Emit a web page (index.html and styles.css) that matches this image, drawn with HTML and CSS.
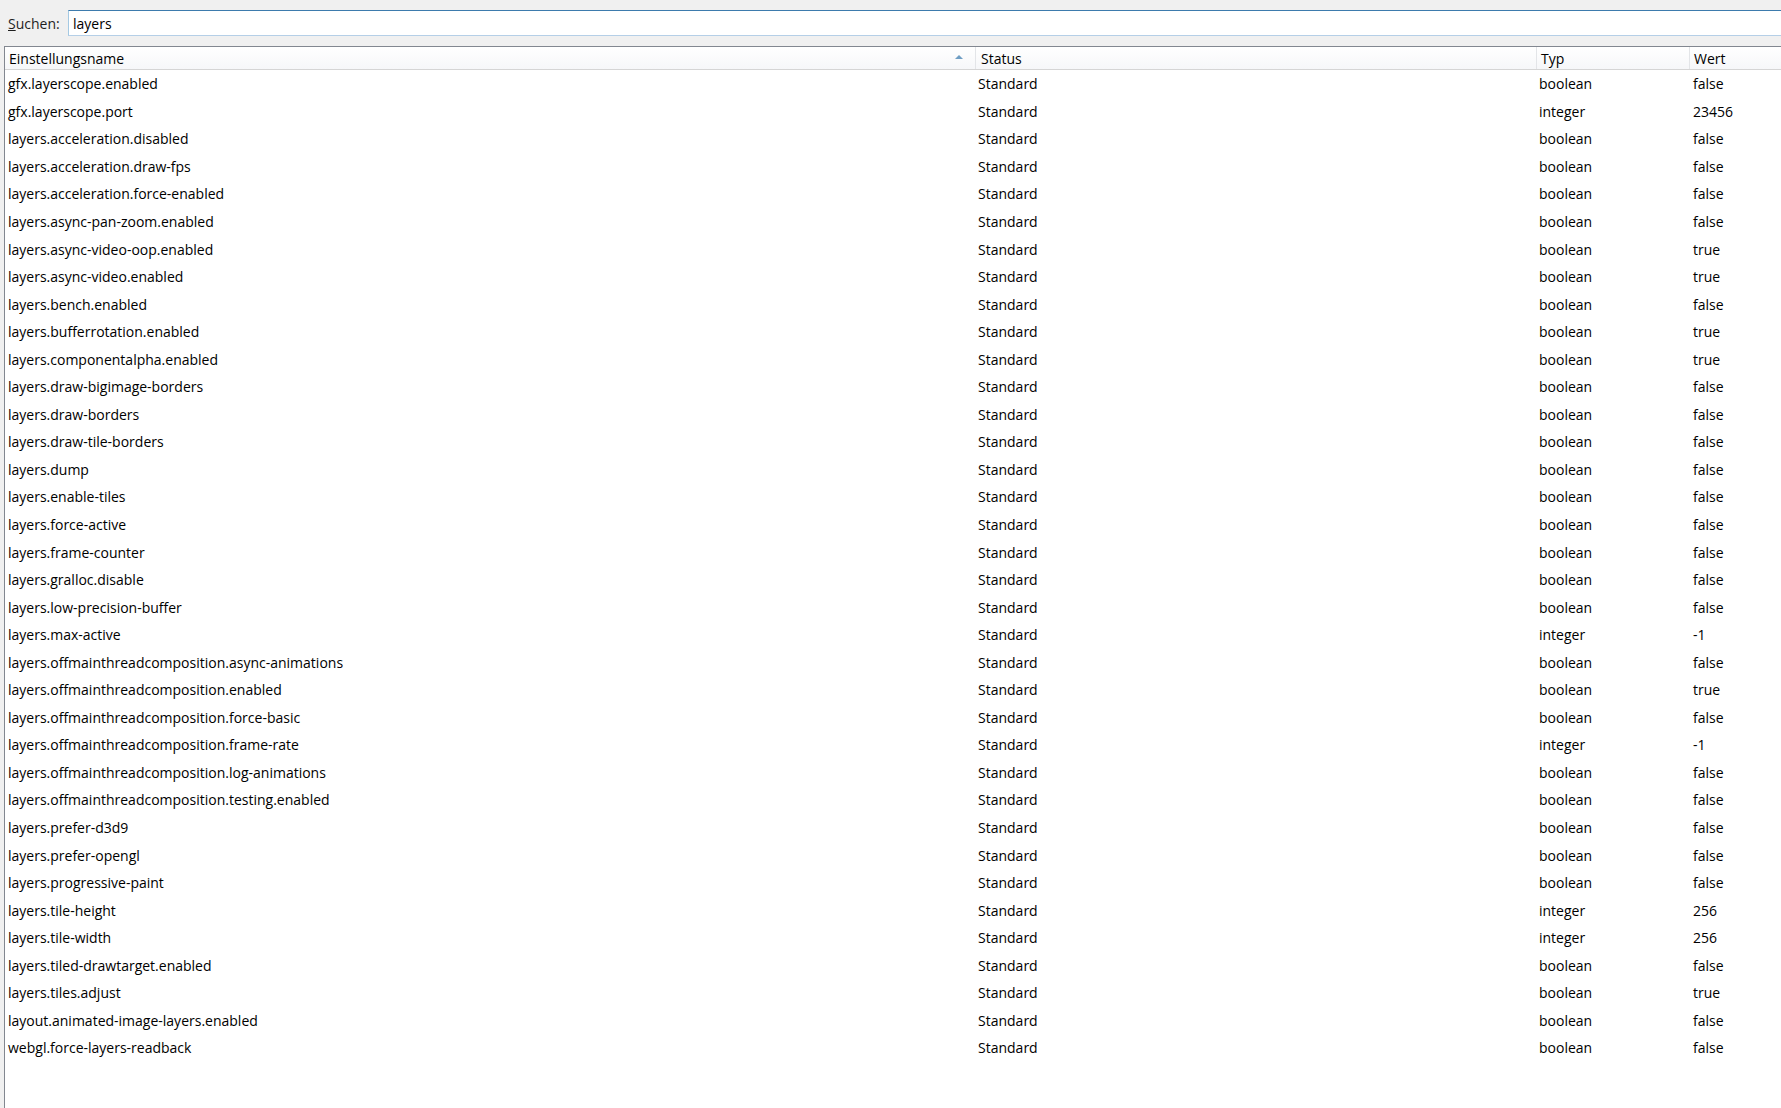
FILE: index.html
```html
<!DOCTYPE html>
<html lang="de">
<head>
<meta charset="UTF-8" />
<title>about:config</title>
<link rel="stylesheet" href="styles.css">
</head>
<body>

<div class="search">
  <label for="filter"><u>S</u>uchen:</label>
  <input id="filter" type="text" value="layers">
</div>

<div class="prefs">
  <div class="row head">
    <div class="cell">Einstellungsname<span class="sort"></span></div>
    <div class="cell">Status</div>
    <div class="cell">Typ</div>
    <div class="cell">Wert</div>
  </div>
  <div id="rows"></div>
</div>

<script>
  const prefs = [
    ['gfx.layerscope.enabled', 'boolean', 'false'],
    ['gfx.layerscope.port', 'integer', '23456'],
    ['layers.acceleration.disabled', 'boolean', 'false'],
    ['layers.acceleration.draw-fps', 'boolean', 'false'],
    ['layers.acceleration.force-enabled', 'boolean', 'false'],
    ['layers.async-pan-zoom.enabled', 'boolean', 'false'],
    ['layers.async-video-oop.enabled', 'boolean', 'true'],
    ['layers.async-video.enabled', 'boolean', 'true'],
    ['layers.bench.enabled', 'boolean', 'false'],
    ['layers.bufferrotation.enabled', 'boolean', 'true'],
    ['layers.componentalpha.enabled', 'boolean', 'true'],
    ['layers.draw-bigimage-borders', 'boolean', 'false'],
    ['layers.draw-borders', 'boolean', 'false'],
    ['layers.draw-tile-borders', 'boolean', 'false'],
    ['layers.dump', 'boolean', 'false'],
    ['layers.enable-tiles', 'boolean', 'false'],
    ['layers.force-active', 'boolean', 'false'],
    ['layers.frame-counter', 'boolean', 'false'],
    ['layers.gralloc.disable', 'boolean', 'false'],
    ['layers.low-precision-buffer', 'boolean', 'false'],
    ['layers.max-active', 'integer', '-1'],
    ['layers.offmainthreadcomposition.async-animations', 'boolean', 'false'],
    ['layers.offmainthreadcomposition.enabled', 'boolean', 'true'],
    ['layers.offmainthreadcomposition.force-basic', 'boolean', 'false'],
    ['layers.offmainthreadcomposition.frame-rate', 'integer', '-1'],
    ['layers.offmainthreadcomposition.log-animations', 'boolean', 'false'],
    ['layers.offmainthreadcomposition.testing.enabled', 'boolean', 'false'],
    ['layers.prefer-d3d9', 'boolean', 'false'],
    ['layers.prefer-opengl', 'boolean', 'false'],
    ['layers.progressive-paint', 'boolean', 'false'],
    ['layers.tile-height', 'integer', '256'],
    ['layers.tile-width', 'integer', '256'],
    ['layers.tiled-drawtarget.enabled', 'boolean', 'false'],
    ['layers.tiles.adjust', 'boolean', 'true'],
    ['layout.animated-image-layers.enabled', 'boolean', 'false'],
    ['webgl.force-layers-readback', 'boolean', 'false']
  ];

  const rows = document.getElementById('rows');
  for (const [name, type, value] of prefs) {
    const row = document.createElement('div');
    row.className = 'row';
    for (const text of [name, 'Standard', type, value]) {
      const cell = document.createElement('div');
      cell.className = 'cell';
      cell.textContent = text;
      row.appendChild(cell);
    }
    rows.appendChild(row);
  }
</script>

</body>
</html>
```

FILE: styles.css
```css
html, body {
  height: 100%;
}
body {
  margin: 0;
  background: #f0f0f0;
  font-family: "Open Sans", "Noto Sans", sans-serif;
  font-size: 14px;
  color: #000;
  display: flex;
  flex-direction: column;
  overflow: hidden;
}
.search {
  display: flex;
  align-items: center;
  height: 26px;
  padding: 10px 0 10px 8px;
}
.search label {
  width: 60px;
  color: #1e1e1e;
}
.search input {
  flex: 1;
  height: 26px;
  box-sizing: border-box;
  margin: 0 -4px 0 0;
  padding: 0 4px;
  font: inherit;
  color: #000;
  background: #fff;
  border: 1px solid;
  border-color: #3d7bad #b5cfe7 #b5cfe7 #a4c9e3;
  outline: none;
}
.prefs {
  flex: 1;
  margin-left: 4px;
  margin-right: -4px;
  background: #fff;
  border-top: 1px solid #828790;
  border-left: 1px solid #828790;
}
.row {
  display: grid;
  grid-template-columns: 971px 561px 153px 1fr;
  height: 27.55px;
  align-items: center;
}
.row .cell {
  padding-left: 3px;
  white-space: nowrap;
  overflow: hidden;
}
.row .cell:nth-child(2),
.row .cell:nth-child(3) {
  padding-left: 2px;
}
.head {
  height: 22px;
  align-items: stretch;
  background: linear-gradient(#ffffff, #f6f7f9);
  border-bottom: 1px solid #d5d5d5;
}
.head .cell {
  display: flex;
  align-items: center;
  padding-left: 4px;
  border-right: 1px solid #e3e5e8;
  position: relative;
  overflow: visible;
}
.row.head .cell:nth-child(2) {
  padding-left: 5px;
}
.row.head .cell:nth-child(3) {
  padding-left: 4px;
}
.sort {
  position: absolute;
  right: 12px;
  top: 8px;
  width: 0;
  height: 0;
  border-left: 4px solid transparent;
  border-right: 4px solid transparent;
  border-bottom: 4px solid #6f9ec4;
}
```
